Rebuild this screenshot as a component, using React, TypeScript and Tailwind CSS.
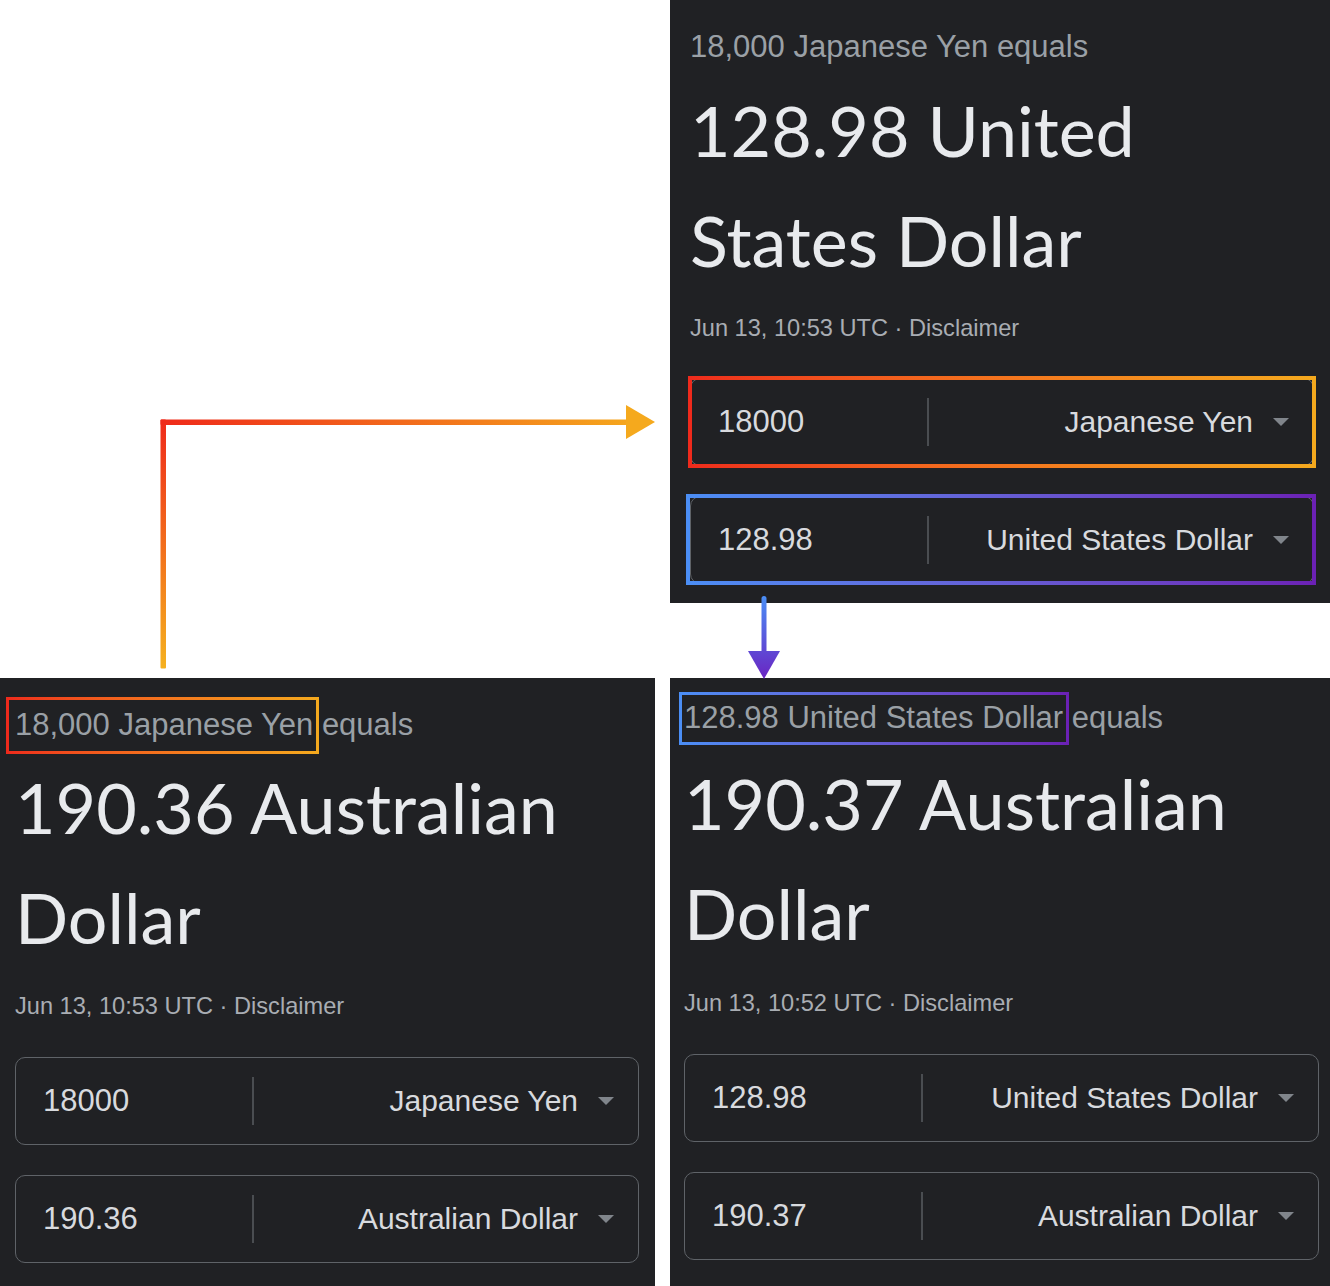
import React from "react";

type Tone = "warm" | "cool";

const edgeTop: Record<Tone, string> = {
  warm: "bg-linear-to-r from-[#ee2a1c] to-[#f4a91e]",
  cool: "bg-linear-to-r from-[#4b8ef5] to-[#6b21b5]",
};
const edgeLeft: Record<Tone, string> = { warm: "bg-[#ee2a1c]", cool: "bg-[#4b8ef5]" };
const edgeRight: Record<Tone, string> = { warm: "bg-[#f4a91e]", cool: "bg-[#6b21b5]" };

// gradient frame drawn over a piece of the screenshot
function Outline({ tone, pos, w }: { tone: Tone; pos: string; w: "3" | "4" }) {
  const h = w === "4" ? "h-[4px]" : "h-[3px]";
  const v = w === "4" ? "w-[4px]" : "w-[3px]";
  return (
    <div className={`pointer-events-none absolute ${pos}`}>
      <div className={`absolute inset-x-0 top-0 ${h} ${edgeTop[tone]}`} />
      <div className={`absolute inset-x-0 bottom-0 ${h} ${edgeTop[tone]}`} />
      <div className={`absolute inset-y-0 left-0 ${v} ${edgeLeft[tone]}`} />
      <div className={`absolute inset-y-0 right-0 ${v} ${edgeRight[tone]}`} />
    </div>
  );
}

type Row = { value: string; currency: string; tone?: Tone; pos?: string };

type PanelProps = {
  pad: string;
  lead: string;
  rest: string;
  leadTone?: Tone;
  leadPos?: string;
  lines: string[];
  bigMt: string;
  date: string;
  dateMt: string;
  boxMt: string;
  rows: Row[];
};

function Panel(p: PanelProps) {
  return (
    <div className={`flex h-full flex-col bg-[#202124] ${p.pad}`}>
      <div className="text-[31px] leading-[40px] text-[#9aa0a6] font-['Liberation_Sans',Arial,sans-serif] whitespace-nowrap">
        <span className="relative">
          {p.lead}
          {p.leadTone && p.leadPos && <Outline tone={p.leadTone} pos={p.leadPos} w="3" />}
        </span>{" "}
        {p.rest}
      </div>
      <div className={`${p.bigMt} text-[70px] leading-[110px] text-[#e8eaed] font-['Lato',sans-serif]`}>
        {p.lines.map((l) => (
          <div key={l} className="whitespace-nowrap">
            {l}
          </div>
        ))}
      </div>
      <div className={`${p.dateMt} text-[23.6px] leading-[32px] text-[#a9adb3] font-['Liberation_Sans',Arial,sans-serif]`}>
        {p.date} · Disclaimer
      </div>
      <div className={`${p.boxMt} flex flex-col gap-[30px]`}>
        {p.rows.map((r) => (
          <div
            key={r.value}
            className="relative flex h-[88px] items-center rounded-[10px] border-[1.5px] border-[#5f6368] font-['Liberation_Sans',Arial,sans-serif] text-[30px] leading-[36px] text-[#d8dade]"
          >
            <div className="w-[236px] pl-[27px] text-[31px] leading-[36px]">{r.value}</div>
            <div className="h-[48px] w-[2px] bg-[#4a4d51]" />
            <div className="flex flex-1 items-center justify-end gap-[20px] pr-[24px]">
              <span>{r.currency}</span>
              <span className="h-0 w-0 border-x-[8.5px] border-t-[8px] border-x-transparent border-t-[#80858b]" />
            </div>
            {r.tone && r.pos && <Outline tone={r.tone} pos={r.pos} w="4" />}
          </div>
        ))}
      </div>
    </div>
  );
}

function Arrows() {
  return (
    <svg className="pointer-events-none absolute left-0 top-0" width="1330" height="1286" viewBox="0 0 1330 1286">
      <defs>
        <linearGradient id="wv" gradientUnits="userSpaceOnUse" x1="0" y1="669" x2="0" y2="420">
          <stop offset="0" stopColor="#f5b11f" />
          <stop offset="1" stopColor="#ef2a1a" />
        </linearGradient>
        <linearGradient id="wh" gradientUnits="userSpaceOnUse" x1="161" y1="0" x2="640" y2="0">
          <stop offset="0" stopColor="#ef2a1a" />
          <stop offset="1" stopColor="#f5a91d" />
        </linearGradient>
        <linearGradient id="cv" gradientUnits="userSpaceOnUse" x1="0" y1="597" x2="0" y2="679">
          <stop offset="0" stopColor="#4a8df6" />
          <stop offset="1" stopColor="#6a24c2" />
        </linearGradient>
      </defs>
      <rect x="160.5" y="419.5" width="5.5" height="249" fill="url(#wv)" rx="1" />
      <rect x="160.5" y="419.5" width="468" height="5.5" fill="url(#wh)" rx="1" />
      <polygon points="626,405 655,422 626,439" fill="#f5a91d" />
      <rect x="761.5" y="596" width="5" height="58" rx="2.5" fill="url(#cv)" />
      <polygon points="748,651 780,651 764,679" fill="url(#cv)" />
    </svg>
  );
}

export default function App() {
  return (
    <div className="relative grid h-[1286px] w-[1330px] grid-cols-[655px_660px] grid-rows-[603px_608px] gap-x-[15px] gap-y-[75px] bg-white">
      <div />
      <Panel
        pad="pl-[20px] pr-[16px] pt-[27px]"
        lead="18,000 Japanese Yen"
        rest="equals"
        lines={["128.98 United", "States Dollar"]}
        bigMt="mt-[8px]"
        date="Jun 13, 10:53 UTC"
        dateMt="mt-[17px]"
        boxMt="mt-[34px]"
        rows={[
          { value: "18000", currency: "Japanese Yen", tone: "warm", pos: "-inset-[3px]" },
          { value: "128.98", currency: "United States Dollar", tone: "cool", pos: "-left-[5px] -right-[3px] -top-[3px] -bottom-[2px]" },
        ]}
      />
      <Panel
        pad="pl-[15px] pr-[16px] pt-[27px]"
        lead="18,000 Japanese Yen"
        rest="equals"
        leadTone="warm"
        leadPos="-left-[9px] -right-[6px] -top-[10px] -bottom-[12px]"
        lines={["190.36 Australian", "Dollar"]}
        bigMt="mt-[7px]"
        date="Jun 13, 10:53 UTC"
        dateMt="mt-[18px]"
        boxMt="mt-[35px]"
        rows={[
          { value: "18000", currency: "Japanese Yen" },
          { value: "190.36", currency: "Australian Dollar" },
        ]}
      />
      <Panel
        pad="pl-[14px] pr-[11px] pt-[20px]"
        lead="128.98 United States Dollar"
        rest="equals"
        leadTone="cool"
        leadPos="-left-[5px] -right-[6px] -top-[8px] -bottom-[10px]"
        lines={["190.37 Australian", "Dollar"]}
        bigMt="mt-[10px]"
        date="Jun 13, 10:52 UTC"
        dateMt="mt-[19px]"
        boxMt="mt-[35px]"
        rows={[
          { value: "128.98", currency: "United States Dollar" },
          { value: "190.37", currency: "Australian Dollar" },
        ]}
      />
      <Arrows />
    </div>
  );
}
